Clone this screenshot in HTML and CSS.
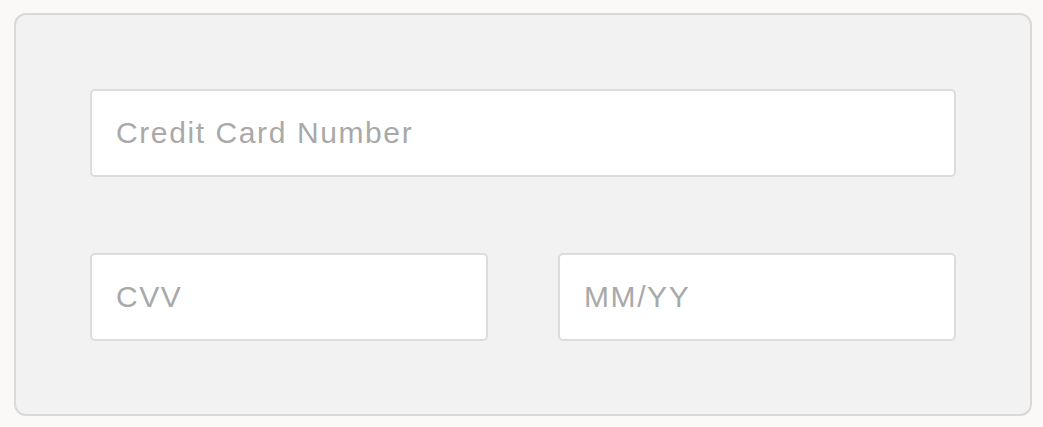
FILE: index.html
```html
<!DOCTYPE html>
<html>
<head>
<meta charset="utf-8">
<link rel="stylesheet" href="styles.css">
</head>
<body>
<div class="page">
  <form class="card">
    <input class="field field-wide" type="text" placeholder="Credit Card Number">
    <input class="field" type="text" placeholder="CVV">
    <input class="field" type="text" placeholder="MM/YY">
  </form>
</div>
</body>
</html>
```

FILE: styles.css
```css
html, body {
  margin: 0;
  padding: 0;
  background: #faf9f7;
}
.page {
  padding: 13px 0 0 14px;
}
.card {
  box-sizing: border-box;
  width: 1018px;
  margin: 0;
  padding: 74px 74px 73px 74px;
  background: #f2f2f2;
  border: 2px solid #d9d9d9;
  border-radius: 12px;
  display: grid;
  grid-template-columns: 1fr 1fr;
  column-gap: 70px;
  row-gap: 76px;
}
.field {
  box-sizing: border-box;
  height: 88px;
  width: 100%;
  margin: 0;
  padding: 0 0 0 24px;
  background: #ffffff;
  border: 2px solid #dcdcdc;
  border-radius: 5px;
  font-family: "Liberation Sans", Arial, Helvetica, sans-serif;
  font-size: 30px;
  letter-spacing: 1.6px;
  color: #555;
  outline: none;
}
.field::placeholder {
  color: #a9a9a9;
  opacity: 1;
}
.field-wide {
  grid-column: 1 / 3;
}
```
